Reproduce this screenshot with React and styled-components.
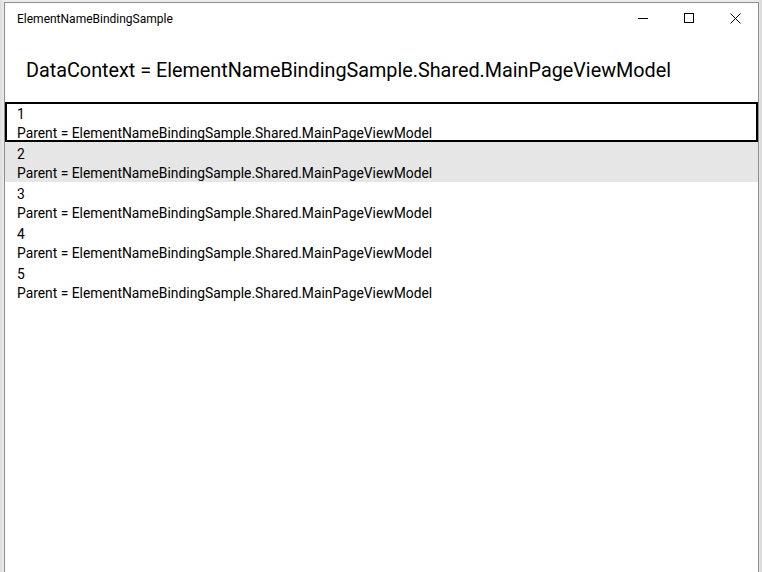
import React from "react";
import styled, { createGlobalStyle } from "styled-components";

const GlobalStyle = createGlobalStyle`
  html, body {
    margin: 0;
    padding: 0;
    background: #e4e4e4;
  }
  body {
    font-family: Roboto, "Liberation Sans", sans-serif;
    color: #000;
  }
`;

const Desktop = styled.div`
  width: 762px;
  height: 572px;
  box-sizing: border-box;
  padding: 2px 3px 0 4px;
  background: linear-gradient(90deg, #dcdcdc 0, #ececec 4px, #ececec 758px, #d6d6d6 762px);
`;

const Window = styled.div`
  height: 100%;
  box-sizing: border-box;
  border: 1px solid #8c8c8c;
  border-bottom: none;
  background: #fff;
  display: flex;
  flex-direction: column;
`;

const TitleBar = styled.div`
  height: 32px;
  display: flex;
  align-items: center;
  flex-shrink: 0;
`;

const Title = styled.div`
  flex: 1;
  padding-left: 12px;
  font-size: 12px;
  line-height: 16px;
  padding-bottom: 1px;
`;

const Caption = styled.div`
  width: 46px;
  height: 32px;
  display: flex;
  align-items: center;
  justify-content: center;
  padding-bottom: 2px;
  box-sizing: border-box;
  svg {
    display: block;
  }
`;

const Header = styled.div`
  height: 67px;
  flex-shrink: 0;
  display: flex;
  align-items: center;
  padding-left: 21px;
  padding-top: 4px;
  font-size: 19.8px;
  box-sizing: border-box;
`;

const List = styled.div`
  display: flex;
  flex-direction: column;
`;

const Row = styled.div`
  height: 40px;
  box-sizing: border-box;
  padding: 3px 12px 0;
  font-size: 13.85px;
  line-height: 19px;
  background: ${(p) => (p.$hover ? "#e6e6e6" : "transparent")};
  box-shadow: ${(p) => (p.$selected ? "inset 0 0 0 2px #000" : "none")};
`;

const Line = styled.div`
  white-space: nowrap;
`;

const Minimize = () => (
  <svg width="10" height="10" viewBox="0 0 10 10">
    <path d="M0 5.5h10" stroke="#000" strokeWidth="1" />
  </svg>
);

const Maximize = () => (
  <svg width="10" height="10" viewBox="0 0 10 10">
    <rect x="0.5" y="0.5" width="9" height="9" fill="none" stroke="#000" strokeWidth="1" />
  </svg>
);

const Close = () => (
  <svg width="11" height="11" viewBox="0 0 11 11">
    <path d="M0.5 0.5l10 10M10.5 0.5l-10 10" stroke="#000" strokeWidth="1" />
  </svg>
);

const items = [1, 2, 3, 4, 5];

export default function App() {
  return (
    <>
      <GlobalStyle />
      <Desktop>
        <Window>
          <TitleBar>
            <Title>ElementNameBindingSample</Title>
            <Caption>
              <Minimize />
            </Caption>
            <Caption>
              <Maximize />
            </Caption>
            <Caption>
              <Close />
            </Caption>
          </TitleBar>
          <Header>DataContext = ElementNameBindingSample.Shared.MainPageViewModel</Header>
          <List>
            {items.map((n) => (
              <Row key={n} $selected={n === 1} $hover={n === 2}>
                <Line>{n}</Line>
                <Line>Parent = ElementNameBindingSample.Shared.MainPageViewModel</Line>
              </Row>
            ))}
          </List>
        </Window>
      </Desktop>
    </>
  );
}
